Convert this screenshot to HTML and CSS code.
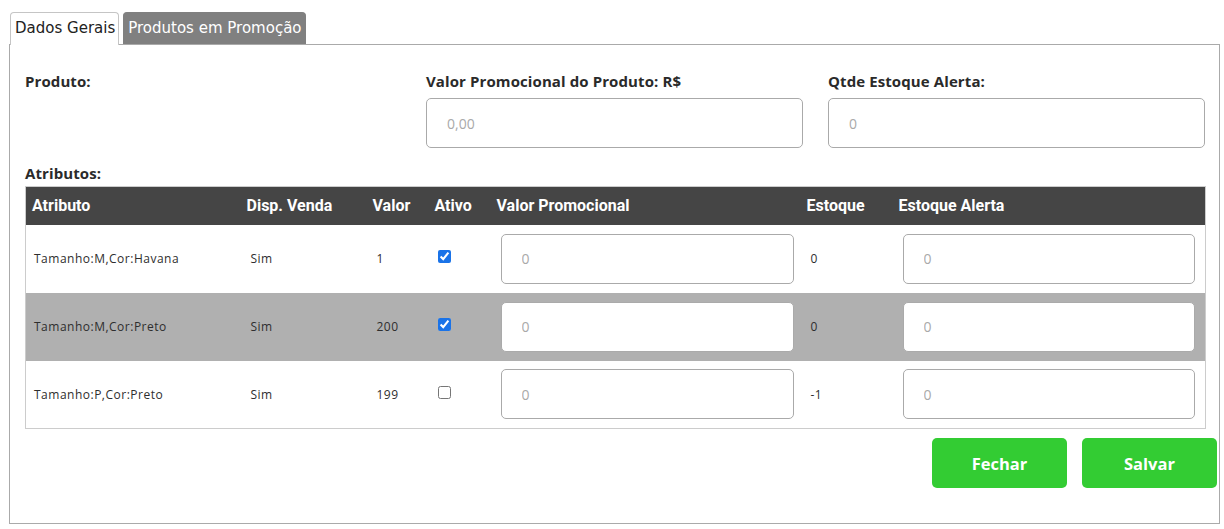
FILE: index.html
```html
<!DOCTYPE html>
<html lang="pt">
<head>
<meta charset="utf-8">
<title>Produtos em Promoção</title>
<link rel="stylesheet" href="styles.css">
</head>
<body>
<div class="tabs">
  <div class="tab">Dados Gerais</div>
  <div class="tab active">Produtos em Promoção</div>
</div>
<div class="panel">
  <div class="fields">
    <div class="field"><label class="lbl">Produto:</label></div>
    <div class="field"><label class="lbl">Valor Promocional do Produto: R$</label><input class="inp" placeholder="0,00"></div>
    <div class="field"><label class="lbl">Qtde Estoque Alerta:</label><input class="inp" placeholder="0"></div>
  </div>
  <div class="lbl attr">Atributos:</div>
  <table class="grid">
    <colgroup>
      <col style="width:215px"><col style="width:126px"><col style="width:62px"><col style="width:62px"><col style="width:310px"><col style="width:92px"><col style="width:313px">
    </colgroup>
    <thead>
      <tr><th>Atributo</th><th>Disp. Venda</th><th>Valor</th><th>Ativo</th><th>Valor Promocional</th><th>Estoque</th><th>Estoque Alerta</th></tr>
    </thead>
    <tbody>
      <tr><td class="first">Tamanho:M,Cor:Havana</td><td>Sim</td><td>1</td><td><input type="checkbox" class="chk" checked></td><td class="ic"><input class="inp" placeholder="0"></td><td>0</td><td class="ic2"><input class="inp" placeholder="0"></td></tr>
      <tr class="alt"><td class="first">Tamanho:M,Cor:Preto</td><td>Sim</td><td>200</td><td><input type="checkbox" class="chk" checked></td><td class="ic"><input class="inp" placeholder="0"></td><td>0</td><td class="ic2"><input class="inp" placeholder="0"></td></tr>
      <tr><td class="first">Tamanho:P,Cor:Preto</td><td>Sim</td><td>199</td><td><input type="checkbox" class="chk"></td><td class="ic"><input class="inp" placeholder="0"></td><td>-1</td><td class="ic2"><input class="inp" placeholder="0"></td></tr>
    </tbody>
  </table>
  <div class="actions">
    <button class="btn">Fechar</button>
    <button class="btn">Salvar</button>
  </div>
</div>
</body>
</html>
```
FILE: styles.css
```css
* { box-sizing: border-box; }
body {
  margin: 0;
  padding: 12px 5px 0 9px;
  background: #fff;
  font-family: "Open Sans", sans-serif;
  color: #222;
}
.tabs {
  display: flex;
  gap: 4px;
  padding-left: 1px;
  height: 32px;
  position: relative;
  z-index: 1;
}
.tab {
  font-family: "DejaVu Sans", Verdana, sans-serif;
  font-size: 15px;
  line-height: 30px;
  padding: 0 3px 0 4px;
  border: 1px solid #c5c5c5;
  border-bottom: none;
  border-radius: 4px 4px 0 0;
  background: #fff;
  color: #222;
  height: 33px;
}
.tab.active {
  background: #808080;
  border-color: #808080;
  color: #fff;
  height: 32px;
}
.panel {
  border: 1px solid #aaa;
  height: 480px;
  width: 1211px;
  padding: 23px 0 0 15px;
}
.fields {
  display: grid;
  grid-template-columns: 376px 377px 377px;
  column-gap: 25px;
  height: 96px;
}
.field { display: flex; flex-direction: column; }
.lbl {
  font-family: "Open Sans", sans-serif;
  font-weight: 700;
  font-size: 15px;
  color: #2a2a2a;
  line-height: 26px;
  height: 30px;
  letter-spacing: 0.1px;
}
.inp {
  height: 50px;
  width: 100%;
  border: 1px solid #aaa;
  border-radius: 5px;
  padding: 0 20px;
  font-family: "Open Sans", sans-serif;
  font-size: 14px;
  color: #333;
  background: #fff;
}
.inp::placeholder { color: #a9a9a9; }
.attr { height: 22px; line-height: 18px; }
.grid {
  border-collapse: collapse;
  table-layout: fixed;
  width: 1180px;
  border: 1px solid #ccc;
}
.grid th {
  background: #454545;
  color: #fff;
  font-family: Roboto, sans-serif;
  font-weight: 700;
  font-size: 16px;
  text-align: left;
  height: 38px;
  padding: 0 6px;
}
.grid td {
  height: 68px;
  padding: 0 8px 0 10px;
  font-size: 12px;
  letter-spacing: 0.5px;
  color: #2e2e2e;
  vertical-align: middle;
}
.grid td.first { padding-left: 8px; }
.grid td.ic { padding: 0 7px 0 10px; }
.grid td.ic2 { padding: 0 10px; }
.grid tr.alt td { background: #b0b0b0; }
.chk {
  margin: 0 0 0 -1px;
  width: 13px;
  height: 13px;
  accent-color: #1a73e8;
}
.actions {
  display: flex;
  justify-content: flex-end;
  gap: 15px;
  margin-top: 9px;
  padding-right: 2px;
}
.btn {
  width: 135px;
  height: 50px;
  border: none;
  border-radius: 5px;
  background: #33cc33;
  color: #fff;
  font-family: "Open Sans", sans-serif;
  font-weight: 700;
  font-size: 16.5px;
}
```
